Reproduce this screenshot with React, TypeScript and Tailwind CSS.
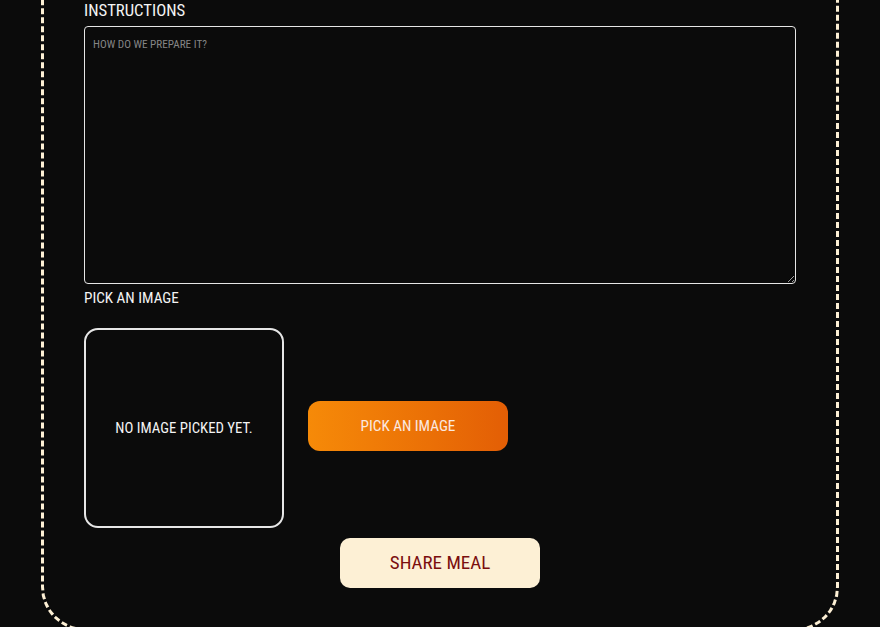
import React from "react";

export default function App() {
  const font = { fontFamily: '"Roboto Condensed", "DejaVu Sans Condensed", sans-serif' };
  return (
    <div className="h-[627px] w-full overflow-hidden bg-[#0b0b0b]" style={font}>
      <div className="mx-auto -mt-[44px] w-[798px] rounded-[44px] border-[3px] border-dashed border-[#fdf0d5] px-10 pb-[40px] pt-[40px]">
        <div className="flex flex-col">
          <label className="text-[16.7px] leading-[24px] text-[#f4f4f4]">INSTRUCTIONS</label>
          <textarea
            className="mt-[3px] h-[258px] w-full resize-y rounded-[4px] border border-[#e6e6e6] bg-[#0b0b0b] px-2 py-[10px] text-[11.2px] text-white placeholder:text-[#858585] outline-none"
            placeholder="HOW DO WE PREPARE IT?"
          />
        </div>
        <div className="mt-[2px] flex flex-col">
          <label className="text-[15.2px] leading-[24px] text-[#f4f4f4]">PICK AN IMAGE</label>
          <div className="mt-[18px] flex items-center gap-6">
            <div className="flex h-[200px] w-[200px] items-center justify-center rounded-[14px] border-2 border-[#e6e6e6] text-[14.8px] text-[#f4f4f4]">
              NO IMAGE PICKED YET.
            </div>
            <button className="mb-[4px] h-[50px] w-[200px] rounded-[12px] bg-gradient-to-r from-[#f68a08] to-[#e35e05] text-[15.2px] text-[#fbe9e0]">
              PICK AN IMAGE
            </button>
          </div>
        </div>
        <div className="mt-[10px] flex justify-center">
          <button className="h-[50px] w-[200px] rounded-[10px] bg-[#fdf0d5] text-[19px] text-[#7b0e0e]">
            SHARE MEAL
          </button>
        </div>
      </div>
    </div>
  );
}
